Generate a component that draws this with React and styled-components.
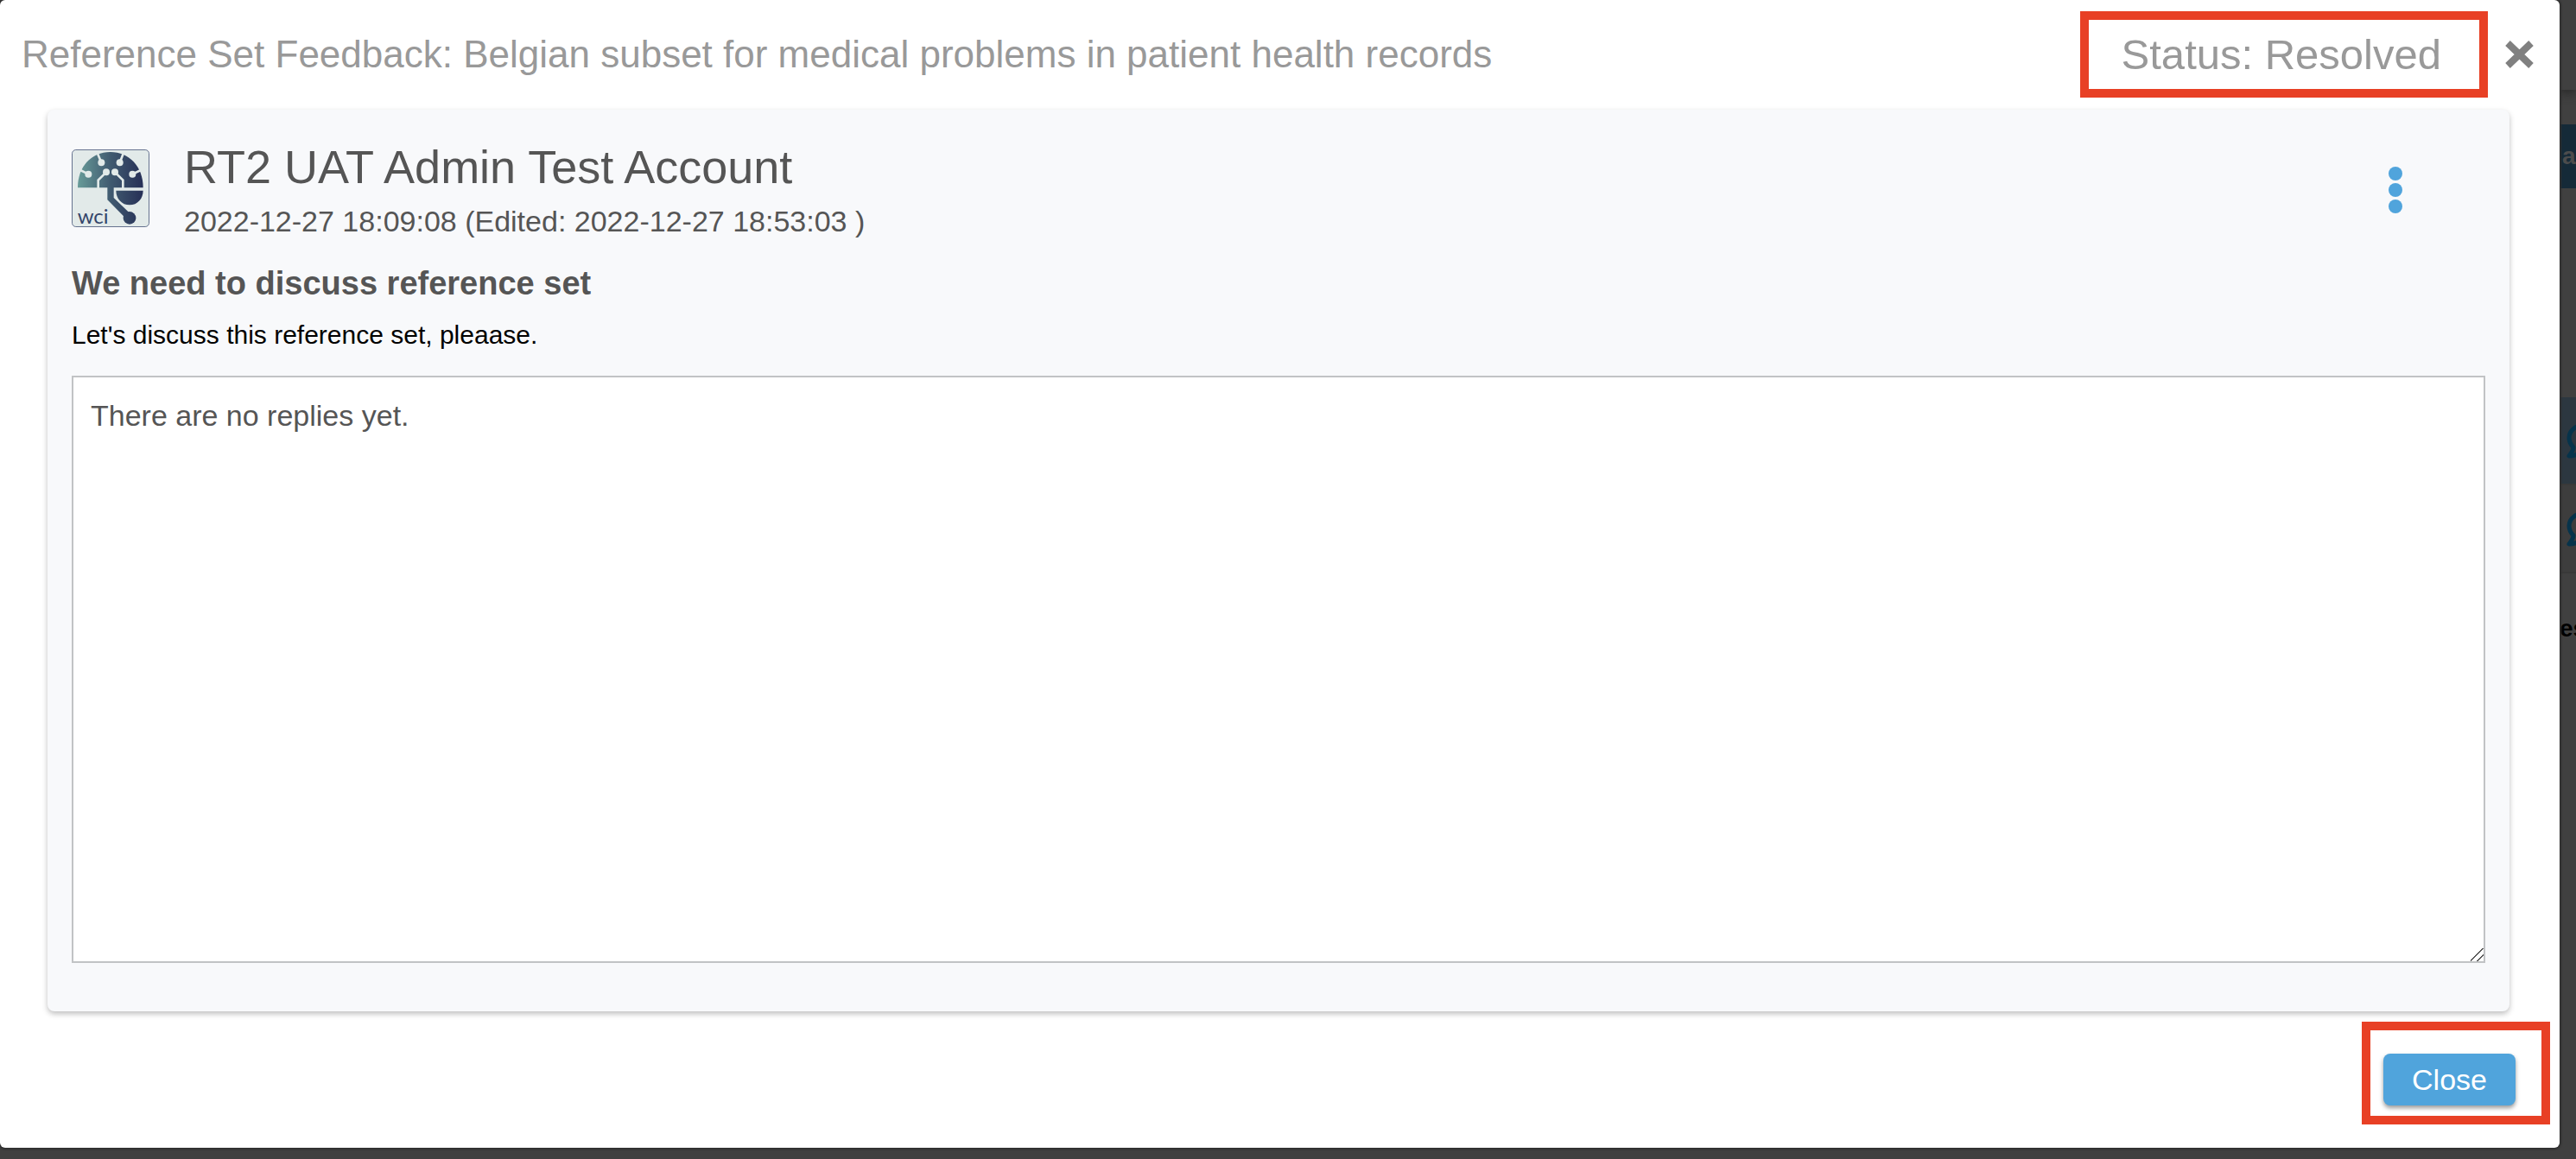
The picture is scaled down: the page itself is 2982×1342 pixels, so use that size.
import React from 'react';
import styled, { createGlobalStyle, css } from 'styled-components';

const GlobalStyle = createGlobalStyle`
    * {
        box-sizing: border-box;
    }
    body {
        margin: 0;
        background: #404040;
        font-family: "Liberation Sans", Arial, sans-serif;
        color: #555;
    }
`;

const Page = styled.div`
    display: flex;
    align-items: stretch;
    min-height: 100vh;
    padding-bottom: 13px;
    overflow: hidden;
`;

const Dialog = styled.section`
    display: flex;
    flex-direction: column;
    flex: 1;
    min-width: 0;
    z-index: 1;
    background: #fff;
    border-radius: 6px;
    box-shadow: 0 0 2px 2px #303030;
`;

/* red frame round the parts that the guide points at */
const highlight = css`
    border: 10px solid #e84025;
`;

const Header = styled.header`
    display: flex;
    align-items: center;
    padding: 13px 30px 14px 25px;
    color: #999;
`;

const Title = styled.h1`
    flex: 1;
    margin: 0;
    font-size: 44px;
    font-weight: 400;
    line-height: 50px;
`;

const Status = styled.div`
    ${highlight}
    padding: 14px 44px 14px 38px;
    font-size: 49px;
    line-height: 52px;
`;

const IconButton = styled.button`
    display: flex;
    padding: 0;
    border: 0;
    background: none;
    cursor: pointer;
`;

const DismissButton = styled(IconButton)`
    margin-left: 20px;
    color: #808080;
`;

const MenuButton = styled(IconButton)`
    margin-top: 30px;
    color: #50a4dc;
`;

const Card = styled.article`
    display: flex;
    flex-direction: column;
    flex: 1;
    margin: 0 58px 0 55px;
    padding: 36px 28px 56px;
    border-radius: 8px;
    background: #f8f9fb;
    box-shadow: 0 3px 6px rgba(0, 0, 0, 0.25);
`;

const Author = styled.div`
    display: flex;
    align-items: flex-start;
    gap: 40px;
    padding-right: 96px;
`;

const Avatar = styled.div`
    display: flex;
    margin-top: 10px;
`;

const AuthorText = styled.div`
    flex: 1;
`;

const Name = styled.h2`
    margin: 0;
    font-size: 54px;
    font-weight: 400;
    line-height: 60px;
`;

const Time = styled.p`
    margin: 0;
    font-size: 34px;
    line-height: 66px;
`;

const Subject = styled.h3`
    margin: 6px 0 0;
    font-size: 38px;
    line-height: 66px;
`;

const Message = styled.p`
    margin: 0 0 20px;
    font-size: 30px;
    line-height: 54px;
    color: #000;
`;

const Replies = styled.textarea`
    display: block;
    flex: 1;
    width: 100%;
    min-height: 200px;
    padding: 20px;
    border: 2px solid #c1c3c5;
    background: #fff;
    color: #555;
    font-family: inherit;
    font-size: 34px;
    line-height: 48px;
    resize: both;
    outline: 0;

    &::-webkit-resizer {
        background: linear-gradient(
            135deg,
            transparent 46%,
            #555 46%,
            #555 52%,
            transparent 52%,
            transparent 72%,
            #555 72%,
            #555 78%,
            transparent 78%
        );
    }
`;

const Footer = styled.footer`
    display: flex;
    justify-content: flex-end;
    padding: 12px 11px 27px;
`;

const CloseFrame = styled.div`
    ${highlight}
    padding: 27px 30px 12px 15px;
`;

const CloseButton = styled.button`
    display: block;
    padding: 0 33px;
    border: 0;
    border-radius: 8px;
    background: #50a4dc;
    box-shadow: 0 3px 5px rgba(0, 0, 0, 0.4);
    color: #fff;
    font-family: inherit;
    font-size: 34px;
    line-height: 60px;
    cursor: pointer;
`;

/* what is left visible of the page under the backdrop */
const Behind = styled.aside`
    display: flex;
    flex-direction: column;
    width: 19px;
    overflow: hidden;
    font-size: 28px;
    font-weight: 700;
`;

const TopBar = styled.div`
    height: 104px;
    background: #404040;
    box-shadow: 0 2px 14px #202020;
`;

const Tab = styled.div`
    height: 74px;
    margin-top: 40px;
    padding-left: 3px;
    background: #152a38;
    color: #4c4c4c;
    line-height: 74px;
`;

const Rows = styled.div`
    margin-top: 242px;
`;

const Row = styled.div`
    display: flex;
    align-items: center;
    height: 102px;
    padding-left: 7px;
    border-bottom: 2px solid #393939;
    background: ${props => (props.$active ? '#2c3740' : '#3d3d3d')};
    color: #06334b;
`;

const Pager = styled.div`
    margin-top: 40px;
    color: #000;
    line-height: 48px;
`;

const Logo = () => (
    <svg width="90" height="90" viewBox="0 0 270 270" role="img" aria-label="wci">
        <defs>
            <linearGradient id="brain" gradientUnits="userSpaceOnUse" x1="20" y1="0" x2="250" y2="0">
                <stop offset="0" stopColor="#689c99" />
                <stop offset="0.5" stopColor="#405a70" />
                <stop offset="1" stopColor="#262f56" />
            </linearGradient>
        </defs>
        <rect x="1.5" y="1.5" width="267" height="267" rx="13" fill="#e2eae9" stroke="#66738f" strokeWidth="3" />
        <g fill="url(#brain)">
            <path d="M21 133C21 60 68 9 134 9s114 51 114 124z" />
            <path d="M124 130h22v38l56 54-16 16-62-63z" />
            <path d="M154 143h94c0 28-20 50-47 50s-47-22-47-50z" />
            <circle cx="201" cy="238" r="22" />
        </g>
        <g fill="#e2eae9">
            <circle cx="103" cy="46" r="12" />
            <circle cx="167" cy="46" r="12" />
            <circle cx="58" cy="86" r="12" />
            <circle cx="211" cy="86" r="12" />
            <circle cx="120" cy="79" r="12" />
            <circle cx="150" cy="79" r="12" />
        </g>
        <g fill="none" stroke="#e2eae9" strokeWidth="8">
            <path d="M103 46L88 10M167 46l14-36M58 86L30 72M211 86l29-14" />
            <path d="M120 79L92 107v28M150 79l28 28v28" />
        </g>
        <text x="20" y="259" fontSize="72" fontFamily="Lato, sans-serif" fill="#33456a">wci</text>
    </svg>
);

const CrossIcon = () => (
    <svg width="33" height="32" viewBox="0 0 33 32" aria-hidden="true">
        <path d="M3 3L30 29M30 3L3 29" fill="none" stroke="currentColor" strokeWidth="8" />
    </svg>
);

const DotsIcon = () => (
    <svg width="16" height="54" viewBox="0 0 16 54" fill="currentColor" aria-hidden="true">
        <circle cx="8" cy="8" r="8" />
        <circle cx="8" cy="27" r="8" />
        <circle cx="8" cy="46" r="8" />
    </svg>
);

const CommentSvg = styled.svg`
    flex: none;
`;

const CommentIcon = () => (
    <CommentSvg width="48" height="42" viewBox="0 0 48 42" aria-hidden="true">
        <path
            d="M24 3C12 3 4 9 4 18c0 5 2 8 5 11 0 4-3 7-5 10 6 0 10-2 13-5 2 1 5 1 7 1 12 0 20-7 20-16S36 3 24 3z"
            fill="none"
            stroke="currentColor"
            strokeWidth="5"
            strokeLinejoin="round"
        />
    </CommentSvg>
);

export default class App extends React.Component {
    render(){
        return(
            <Page>
                <GlobalStyle/>
                <Dialog role="dialog" aria-labelledby="title">
                    <Header>
                        <Title id="title">
                            Reference Set Feedback: Belgian subset for medical problems in patient health records
                        </Title>
                        <Status>Status: Resolved</Status>
                        <DismissButton aria-label="Dismiss">
                            <CrossIcon/>
                        </DismissButton>
                    </Header>
                    <Card>
                        <Author>
                            <Avatar>
                                <Logo/>
                            </Avatar>
                            <AuthorText>
                                <Name>RT2 UAT Admin Test Account</Name>
                                <Time>2022-12-27 18:09:08 (Edited: 2022-12-27 18:53:03 )</Time>
                            </AuthorText>
                            <MenuButton aria-label="More actions">
                                <DotsIcon/>
                            </MenuButton>
                        </Author>
                        <Subject>We need to discuss reference set</Subject>
                        <Message>Let's discuss this reference set, pleaase.</Message>
                        <Replies readOnly aria-label="Replies" defaultValue="There are no replies yet."/>
                    </Card>
                    <Footer>
                        <CloseFrame>
                            <CloseButton>Close</CloseButton>
                        </CloseFrame>
                    </Footer>
                </Dialog>
                <Behind>
                    <TopBar/>
                    <Tab>a</Tab>
                    <Rows>
                        <Row $active><CommentIcon/></Row>
                        <Row><CommentIcon/></Row>
                    </Rows>
                    <Pager>es</Pager>
                </Behind>
            </Page>
        );
    }
}
